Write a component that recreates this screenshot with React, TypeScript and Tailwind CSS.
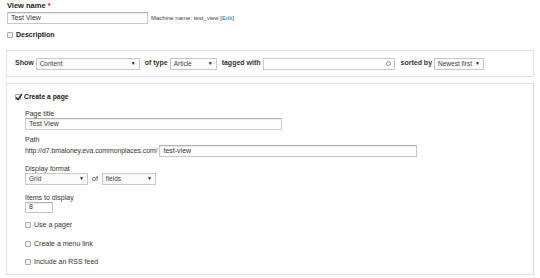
import React from "react";

function Select({ w, value }: { w: string; value: string }) {
  return (
    <div className={`${w} h-[12px] border border-[#c8c8c8] bg-[#fafafa] flex items-center justify-between px-[3px] text-[6.5px] text-[#444]`}>
      <span>{value}</span>
      <span className="text-[5px] text-[#222]">▼</span>
    </div>
  );
}

function Input({ w, value, h = "h-[12px]" }: { w: string; value: string; h?: string }) {
  return (
    <div className={`${w} ${h} border border-[#c8c8c8] border-t-[#b0b0b0] bg-white flex items-center px-[3px] text-[7px] text-[#333] shadow-[inset_0_1px_1px_rgba(0,0,0,0.08)]`}>
      {value}
    </div>
  );
}

function Check({ checked = false }: { checked?: boolean }) {
  return (
    <div className="w-[6px] h-[6px] border border-[#aaa] rounded-[1px] bg-[#f3f3f3] relative">
      {checked && (
        <svg viewBox="0 0 8 8" className="absolute -left-[1px] -top-[2px] w-[8px] h-[8px]">
          <path d="M1 4.5 L3 6.5 L7 1" stroke="#222" strokeWidth="1.3" fill="none" />
        </svg>
      )}
    </div>
  );
}

export default function App() {
  return (
    <div className="w-[540px] h-[278px] bg-white font-['Liberation_Sans',Arial,sans-serif] text-[#333] overflow-hidden">
      <div className="pl-[7px] pr-[5px] pt-[1px]">
        <div className="text-[7.5px] font-bold leading-[10px] text-[#222]">
          View name <span className="text-[#e00]">*</span>
        </div>
        <div className="flex items-center gap-[3px] mt-[1px]">
          <Input w="w-[141px]" value="Test View" />
          <span className="text-[6px] text-[#444]">
            Machine name: test_view [<span className="text-[#0074bd]">Edit</span>]
          </span>
        </div>
        <div className="flex items-center gap-[3px] mt-[7px] h-[8px]">
          <Check />
          <span className="text-[7px] font-bold text-[#222]">Description</span>
        </div>
      </div>

      <div className="mx-[6px] mt-[11px] h-[27px] border border-[#e2e2e2] flex items-center pl-[8px] gap-[2px] text-[7px]">
        <span className="font-bold text-[#333]">Show</span>
        <Select w="w-[104px]" value="Content" />
        <span className="font-bold ml-[3px]">of type</span>
        <Select w="w-[47px]" value="Article" />
        <span className="font-bold ml-[3px]">tagged with</span>
        <div className="w-[132px] h-[12px] border border-[#c8c8c8] bg-white flex items-center justify-end pr-[3px]">
          <div className="w-[5px] h-[5px] rounded-full border border-[#999]" />
        </div>
        <span className="font-bold ml-[4px]">sorted by</span>
        <Select w="w-[50px]" value="Newest first" />
      </div>

      <div className="mx-[6px] mt-[6px] h-[192px] border border-[#e2e2e2] border-r-[#d8d8d8] pl-[8px] pt-[9px] text-[7px]">
        <div className="flex items-center gap-[3px] h-[8px]">
          <Check checked />
          <span className="text-[6.8px] font-bold text-[#222]">Create a page</span>
        </div>
        <div className="pl-[10px]">
          <div className="mt-[8px] leading-[9px] h-[9px]">Page title</div>
          <div className="mt-[0px]"><Input w="w-[257px]" value="Test View" /></div>
          <div className="mt-[5px] leading-[9px] h-[9px]">Path</div>
          <div className="flex items-center gap-[2px] mt-[1px]">
            <span className="text-[6.8px]">http://d7.bmaloney.eva.commonplaces.com/</span>
            <Input w="w-[258px]" value="test-view" />
          </div>
          <div className="mt-[7px] leading-[9px] h-[9px]">Display format</div>
          <div className="flex items-center gap-[4px]">
            <Select w="w-[63px]" value="Grid" />
            <span>of</span>
            <Select w="w-[54px]" value="fields" />
          </div>
          <div className="mt-[8px] leading-[9px] h-[9px]">Items to display</div>
          <div className="mt-[0px]"><Input w="w-[28px]" h="h-[11px]" value="8" /></div>
          <div className="flex items-center gap-[3px] mt-[8px] h-[8px]">
            <Check />
            <span>Use a pager</span>
          </div>
          <div className="flex items-center gap-[3px] mt-[11px] h-[8px]">
            <Check />
            <span>Create a menu link</span>
          </div>
          <div className="flex items-center gap-[3px] mt-[10px] h-[8px]">
            <Check />
            <span>Include an RSS feed</span>
          </div>
        </div>
      </div>
    </div>
  );
}
